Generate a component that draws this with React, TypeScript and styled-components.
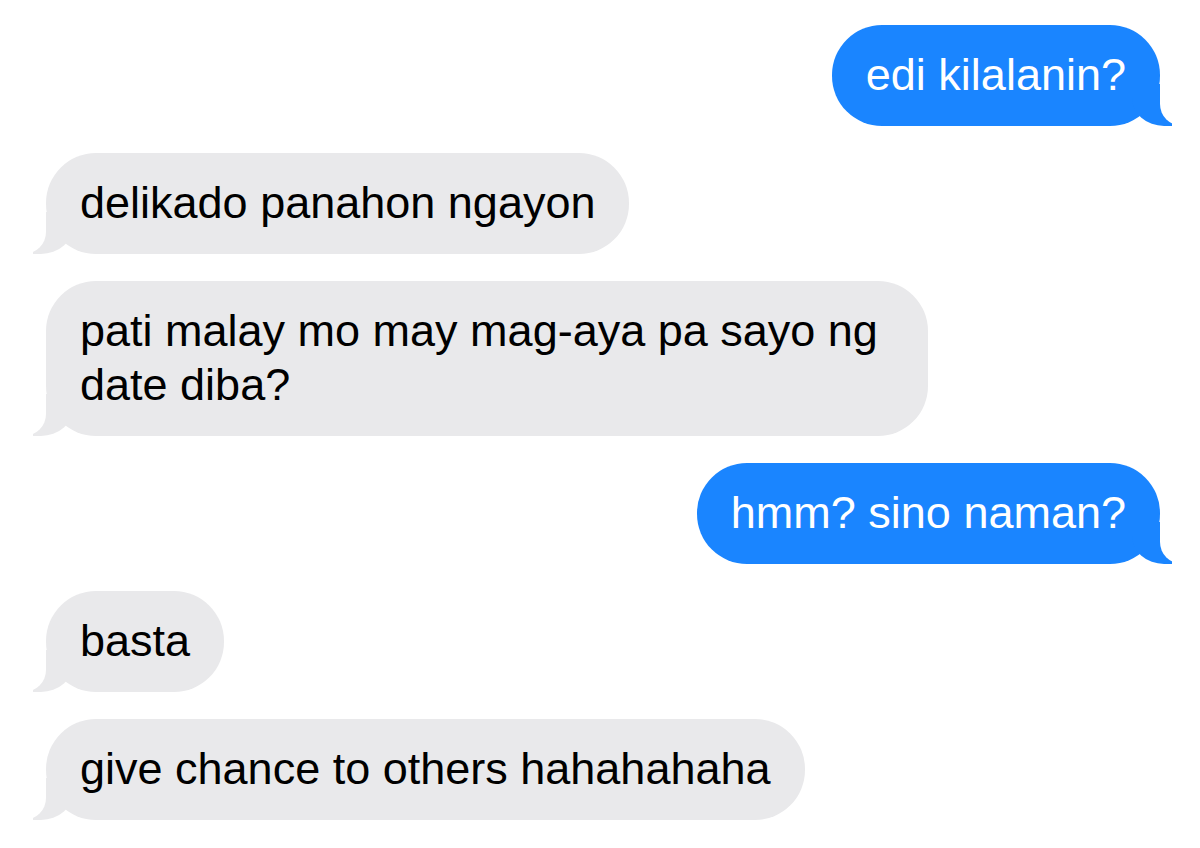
import styled, { createGlobalStyle, css } from "styled-components";

const GlobalStyle = createGlobalStyle`
  body {
    margin: 0;
    background: #ffffff;
    font-family: "Liberation Sans", Arial, sans-serif;
  }
`;

const BLUE = "#1a85ff";
const GRAY = "#e9e9eb";

const Thread = styled.div`
  display: flex;
  flex-direction: column;
  gap: 27px;
  padding: 25px 40px 0 46px;
  height: 848px;
  box-sizing: border-box;
  overflow: hidden;
`;

const Bubble = styled.div<{ $mine?: boolean }>`
  position: relative;
  box-sizing: border-box;
  max-width: 882px;
  padding: 23px 34px 24px;
  border-radius: 50px;
  font-size: 45px;
  line-height: 54px;
  background: ${(p) => (p.$mine ? BLUE : GRAY)};
  color: ${(p) => (p.$mine ? "#ffffff" : "#000000")};
  align-self: ${(p) => (p.$mine ? "flex-end" : "flex-start")};

  &::before,
  &::after {
    content: "";
    position: absolute;
    bottom: 0;
    height: 42px;
  }

  ${(p) =>
    p.$mine
      ? css`
          &::before {
            right: -12px;
            width: 40px;
            background: ${BLUE};
            border-bottom-left-radius: 32px 28px;
          }
          &::after {
            right: -54px;
            width: 54px;
            background: #ffffff;
            border-bottom-left-radius: 22px;
          }
        `
      : css`
          &::before {
            left: -13px;
            width: 40px;
            background: ${GRAY};
            border-bottom-right-radius: 32px 28px;
          }
          &::after {
            left: -54px;
            width: 54px;
            background: #ffffff;
            border-bottom-right-radius: 22px;
          }
        `}
`;

const messages = [
  { mine: true, text: "edi kilalanin?" },
  { mine: false, text: "delikado panahon ngayon" },
  { mine: false, text: "pati malay mo may mag-aya pa sayo ng date diba?" },
  { mine: true, text: "hmm? sino naman?" },
  { mine: false, text: "basta" },
  { mine: false, text: "give chance to others hahahahaha" },
];

const App = () => {
  return (
    <>
      <GlobalStyle />
      <Thread>
        {messages.map((m, i) => (
          <Bubble key={i} $mine={m.mine}>
            {m.text}
          </Bubble>
        ))}
      </Thread>
    </>
  );
};

export default App;
